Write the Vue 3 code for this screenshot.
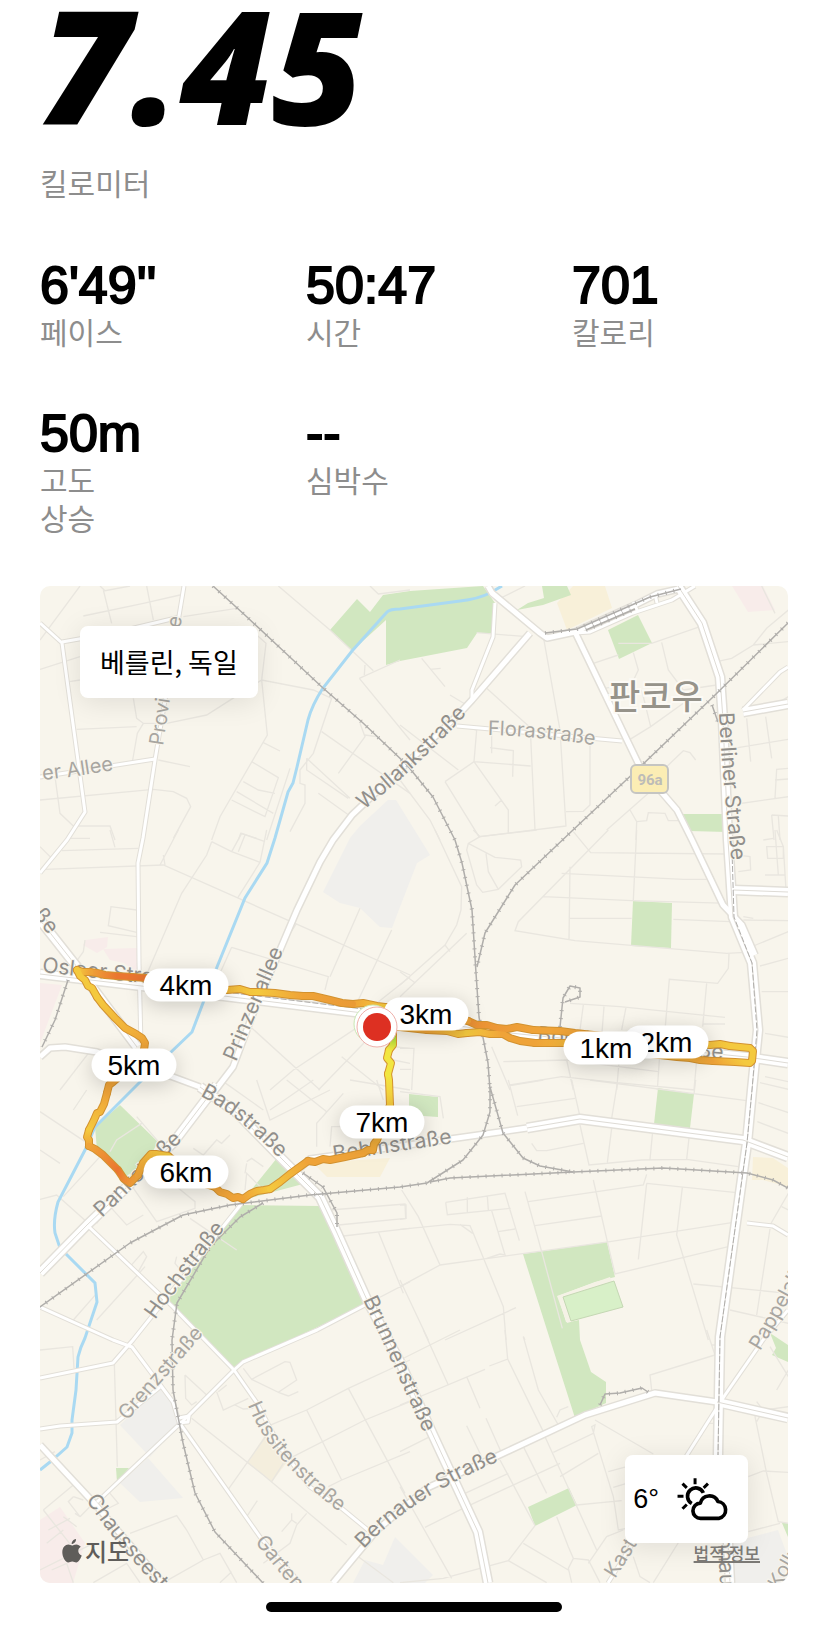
<script setup>
const stats = [
  { value: "6'49''", label: ['페이스'] },
  { value: '50:47', label: ['시간'] },
  { value: '701', label: ['칼로리'] },
  { value: '50m', label: ['고도', '상승'] },
  { value: '--', label: ['심박수'] },
]

const origin = { x: 40, y: 586, w: 748, h: 997 }
const place = (p) => ({
  left: ((p.x - origin.x) / origin.w) * 100 + '%',
  top: ((p.y - origin.y) / origin.h) * 100 + '%',
})

const pins = [
  { text: '2km', x: 666, y: 1042 },
  { text: '1km', x: 606, y: 1048 },
  { text: '3km', x: 426, y: 1014 },
  { text: '4km', x: 186, y: 985 },
  { text: '5km', x: 134, y: 1065 },
  { text: '6km', x: 186, y: 1172 },
  { text: '7km', x: 382, y: 1122 },
]

const O = '#efa338'
const Y = '#f4c93e'
const R = '#ea7630'
const G = '#8fd53a'
const L = '#f2e640'
const route = [
  ['377,1026 400,1027 427,1030', Y, O],
  ['427,1030 447,1031 458,1034 467,1033', O, Y],
  ['467,1033 480,1032 490,1034 503,1034', Y, O],
  ['503,1034 510,1038 520,1041 535,1043', O, O],
  ['535,1043 550,1043 565,1043 600,1048', O, Y],
  ['600,1048 677,1057 690,1058 700,1060 713,1061', Y, O],
  ['713,1061 735,1062 750,1063 752,1061 753,1051 750,1048 730,1046', O, Y],
  ['730,1046 720,1044 710,1045 640,1040', Y, O],
  ['640,1040 575,1033 560,1031 533,1030', O, O],
  ['533,1030 517,1027 507,1029 497,1028 487,1025 477,1025 468,1021', O, '#ea8f34'],
  ['468,1021 420,1010 385,1007', O, Y],
  ['385,1007 377,1006 363,1003 353,1004', Y, O],
  ['353,1004 342,1003 330,1000 313,996 303,996', '#ea9a36', O],
  ['303,996 290,995 275,993 257,992', O, Y],
  ['257,992 250,992 240,989 227,990 186,984', Y, O],
  ['186,984 146,978 133,977 117,976', R, R],
  ['117,976 105,975 97,973 90,972', R, O],
  ['90,972 83,972 77,970', O, Y],
  ['77,970 80,976 85,980 88,986 92,988 97,997', Y, Y],
  ['97,997 103,1005 115,1018 125,1028 136,1034 142,1038 145,1043 144,1050', Y, O],
  ['144,1050 134,1064 113,1082 109,1085 107,1093', O, O],
  ['107,1093 104,1104 100,1112 97,1113 94,1120 89,1130', O, Y],
  ['89,1130 87,1137 89,1140 89,1146', Y, O],
  ['89,1146 95,1149 103,1155 111,1163 118,1170', O, R],
  ['118,1170 124,1179 130,1183 138,1175', R, O],
  ['138,1175 143,1163 151,1154 156,1154 168,1156', O, Y],
  ['168,1156 186,1170 205,1184 215,1187', Y, O],
  ['215,1187 220,1192 227,1194 233,1198 238,1197 243,1199', O, O],
  ['243,1199 250,1194 257,1191 264,1190 270,1189', O, Y],
  ['270,1189 280,1182 290,1174 308,1161', Y, O],
  ['308,1161 315,1162 323,1159 330,1160 345,1157 363,1153', O, O],
  ['363,1153 368,1150 373,1150 374,1144 377,1140 390,1105', O, Y],
  ['390,1105 389,1080 388,1074', Y, L],
  ['388,1074 391,1063 387,1058 389,1050', L, L],
  ['389,1050 393,1045 393,1033', L, G],
].map(([points, from, to]) => {
  const list = points.split(' ').map((p) => p.split(',').map(Number))
  return { points, from, to, a: list[0], b: list[list.length - 1] }
})

const parks = [
  '357,599 370,612 383,595 410,591 483,586 495,603 492,633 477,633 467,648 400,661 386,665 386,620 352,651 330,630',
  '542,586 567,586 571,595 543,605 517,610 528,603 544,598',
  '608,630 638,615 652,643 619,659',
  '682,814 727,814 727,832 689,831',
  '633,901 672,903 671,948 631,946',
  '120,1105 158,1142 145,1165 130,1183 97,1150 95,1127',
  '277,1158 303,1184 243,1200',
  '242,1205 320,1206 365,1305 243,1362 234,1369 168,1300',
  '409,1094 438,1097 438,1117 409,1115',
  '658,1088 694,1094 690,1128 654,1124',
  '523,1254 607,1242 615,1277 595,1282 558,1296 566,1322 579,1320 580,1340 591,1372 606,1382 606,1403 587,1412 575,1418 547,1330',
  '528,1507 569,1488 577,1505 535,1526',
  '770,1333 788,1345 788,1362 772,1355 776,1348',
  '782,1523 788,1523 788,1537',
  '116,1468 129,1468 117,1482',
]
const blocks = [
  '388,800 396,800 430,855 417,863 400,907 392,928 380,927 360,908 340,903 323,892 350,838 360,826',
  '120,1425 160,1387 173,1402 178,1425 150,1457',
  '148,1458 183,1498 140,1502 120,1483',
  '353,1583 365,1560 383,1565 395,1537 433,1575 425,1583',
  '728,1543 778,1530 788,1557 783,1583 733,1583',
]
const sands = [
  '557,603 573,586 605,586 612,608 567,630',
  '313,1163 390,1158 380,1177 327,1177',
  '753,1157 773,1158 788,1168 788,1187 763,1180 752,1180',
]
const roses = [
  '732,586 763,586 775,610 748,612',
  '83,945 86,940 108,937 107,947 97,953',
  '103,949 137,948 137,973 124,963 110,960',
  '40,983 62,985 45,1030 40,1043',
  '40,1520 60,1507 85,1543 73,1583 40,1583',
]

const rails = [
  '213,586 247,617 323,688 363,723 407,765 433,797 455,840 462,863 472,910 476,973 479,1017 488,1063 490,1090 490,1112 483,1135 463,1160 427,1183 400,1187 310,1195 230,1205 183,1215 130,1243 40,1307',
  '788,623 713,697 640,767 573,830 515,885 485,933 477,967',
  '490,1087 503,1133 523,1158 540,1166 573,1172',
  '430,1182 450,1178 573,1172 663,1168 747,1173 773,1180 788,1188',
  '263,1203 240,1217 210,1247 177,1303 172,1340 173,1390 183,1443 195,1493 215,1532 263,1583',
  '560,1027 563,998 570,986 580,988 580,997 565,1002',
  '600,1405 605,1394 620,1393 642,1388 648,1392',
  '303,1173 323,1187 337,1213 337,1227',
  '68,980 55,1020 42,1047',
  '545,633 577,629 650,597 681,589',
  '586,630 635,609',
  '712,705 718,722',
]

const streets = [
  '495,603 493,637 472,690 472,700',
  '40,623 62,643 85,812 67,840 40,873',
  '62,642 113,633 180,617',
  '184,586 155,760 143,838 138,863 139,963 141,1045',
  '40,777 155,759',
  '575,633 590,632 633,613 672,600 695,586',
  '633,602 638,612',
  '655,594 657,603',
  '788,667 780,672 743,710',
  '87,1225 173,1307 234,1370 243,1362 317,1330 365,1305',
  '40,1307 113,1340 132,1347 173,1402 179,1422 227,1490 260,1537 300,1583',
  '234,1370 187,1417 97,1502',
  '179,1418 189,1416 188,1422 178,1423',
  '234,1370 257,1403 280,1447 310,1487 340,1507 368,1530',
  '40,1429 60,1426 117,1422 160,1387',
  '788,1310 763,1340 725,1395 687,1455 633,1543 608,1583',
  '747,1223 773,1226 788,1235',
  '457,726 622,741',
  '242,1203 133,1340 113,1363 40,1378',
]
const avenues = [
  '530,633 472,700 460,713 352,815 333,840 320,862 297,910 280,950 257,1003 233,1067 217,1088 173,1143',
  '488,586 492,593 540,633 547,638 575,632 635,605 657,594 683,588',
  '575,632 640,767 677,810 692,840 723,905 742,925 755,955',
  '300,1168 310,1159 450,1139 527,1128',
  '333,1583 352,1560 377,1530 427,1488 493,1458 585,1415 655,1393 717,1402',
  '40,1057 50,1048 65,1047 97,1052 173,1077 200,1087',
  '40,1445 93,1502 163,1583',
]
const boulevards = [
  '217,1085 173,1143 87,1225 40,1273',
  '678,586 702,623 720,677 723,720 728,840 733,917 752,963 758,1030 752,1090 747,1143 720,1337 718,1455 728,1543 730,1583',
  '743,712 788,704',
  '733,890 788,892',
  '40,974 150,987 363,1013 510,1033 747,1057 788,1063',
  '40,920 77,967 137,1047',
  '200,1087 237,1113 283,1160 320,1197 337,1233 367,1300 400,1362 432,1433 478,1532 488,1583',
  '527,1128 580,1119 743,1140 788,1157',
  '717,1402 788,1418',
]

// Side streets, drawn per map tile on a grid three times finer than the map.
const tiles = [
  { at: '30 580', d: 'M30 180 150 18M160 108 340 70 450 45M220 30 245 130M350 18 370 120M210 18 225 32 300 18M460 110 620 85M30 268 150 230M118 305 150 300M310 355 320 415 340 430 322 460 308 540M140 448 320 440M340 430 410 430 530 405 695 300 850 330 905 355 850 520 810 570 810 610 825 615 825 670 780 755M680 165 708 190 695 300 712 465 570 710 545 780M745 18 900 150 1030 272M1005 255 1003 285M988 295 1110 240M988 295 1140 480M875 455 1140 640M925 580 1005 470 990 430M1005 465 1040 470M830 535 960 655M830 535 830 570 955 655M865 640 960 708M385 540 480 560M30 660 370 628 430 635 470 655 482 680 430 775M75 590 90 700 130 738 240 738 255 780M700 488 750 513M665 545 745 593 705 710 605 660M640 605 685 630 735 640M620 635 730 700M780 565 710 780M625 780 632 760 680 775M1020 18 1045 42 1140 30' },
  { at: '400 580', d: 'M230 158 380 170M65 235 135 320M90 268 122 265M150 345 195 372M260 325 410 460 475 445M430 170 480 450 498 740M165 435 230 450 222 545 392 558M0 435 175 570M135 605 222 545M392 470 405 750M222 545 325 690 325 755M135 605 237 770 498 738M285 678 305 660M275 455 275 520M270 503 340 512 338 590M498 695 550 694 570 675 570 490M580 250 655 225M655 190 755 190 900 140M785 187 805 270 850 330 950 315M700 218 715 270 695 312 612 325M725 330 752 440 690 478M752 440 850 370M950 245 995 235 1060 195 1100 145 1165 90M1165 185 1060 195M800 560 850 512 870 518 887 540M620 750 745 640M690 690 710 725 740 722 745 698 795 700 805 722 840 722M710 725 708 780M1000 505 1165 478M1040 415 1052 545M1097 410 1115 535M1010 672 1165 650M1165 565 1130 568 1125 655M1125 600 1165 597M1115 705 1165 708M1115 705 1122 780M1135 708 1140 780M1085 18 1125 100M1140 365 1165 350M0 600 90 720 120 780M290 60 375 18' },
  { at: '30 830', d: 'M30 50 65 85M120 25 180 25M95 62 325 55M45 118 400 105 885 320 1140 435M445 0 390 105M400 75 405 105M545 35 605 65 690 97M545 35 530 75 455 190 330 480M605 65 635 10 705 35M625 65 645 15M710 0 690 97 622 205M240 0 255 52M320 240 243 230 235 287 320 307M210 307 320 320M165 330 160 365 135 400M990 235 900 440M1085 300 985 510M800 280 740 370M605 352 895 440 885 480M605 352 570 430M1140 440 1040 520M650 580 870 780M1000 580 790 720 720 780M935 680 1060 780M865 780 1020 620M175 670 90 780M1090 650 1140 655M1090 690 1140 700' },
  { at: '400 830', d: 'M105 0 185 170 183 240 170 285 135 345 0 465M200 310 0 500M135 345 150 365M0 425 45 458M220 0 240 20 410 0M325 0 325 8M240 20 205 40 200 60 230 165 248 187 295 178 365 110 362 90 285 82 205 40M258 70 265 125 295 178M520 5 572 68 980 72M625 0 355 275 345 302 525 332 980 370 1035 367M710 0 700 210M485 130 850 148 920 148M430 200 695 212 990 220M510 110 507 330M507 265 695 265M820 268 990 275 1000 265M987 372 985 415 953 460 808 448 795 600M920 460 908 590M510 520 660 530 975 562M550 525 540 600M612 530 605 620M678 532 665 600M0 655 42 655 35 780M0 718 33 718M310 695 500 690 775 725M275 650 330 780M500 690 520 780M330 765 485 740 650 758 885 780M660 660 650 780M780 660 772 780M890 690 882 780M1030 260 1060 265M1030 270 1165 272M1060 348 1165 305M1080 408 1165 385M1085 485 1165 485M1095 610 1165 622M1095 740 1165 755M1100 50 1150 50 1150 85 1103 85ZM1090 30 1120 25M1125 0 1135 135M1095 135 1155 135M1130 0 1150 50 1158 180M1010 75 1050 80 1052 120 1015 125M910 582 975 582' },
  { at: '30 1080', d: 'M30 95 165 185M30 210 90 250M170 30 130 90M240 215 260 180 335 130M320 110 385 185M30 358 80 345 175 430M180 430 300 310 380 425 495 385 495 365 440 320M245 385 290 435 340 405M200 430 290 310M480 415 620 510M300 560 340 515 350 530 325 575M440 530 435 550 460 580M200 640 130 720M345 560 200 720M580 5 700 90M680 0 720 120 900 30M770 0 890 95M720 90 850 0M860 200 860 130 940 40M900 200 905 140 960 140M490 205 520 225 560 180 575 190 600 165M645 330 650 280 700 330M650 245 665 235 700 260M645 280 650 250M900 390 1125 372 1127 415 925 435M940 468 1140 445M1045 455 1120 640M1005 675 1140 605M100 350 210 230M960 0 1140 30M1040 0 1060 60' },
  { at: '400 1080', d: 'M0 35 120 50 130 115M325 0 353 107M330 17 430 0M350 80 525 55M515 0 540 110M652 10 635 115M570 0 1040 62M882 42 887 0M395 190 410 212 440 212 550 190M540 135 567 255 725 240 860 238 1015 260M635 145 622 248M758 155 750 238M868 165 860 238M1080 8 1165 28M1075 68 1165 98M1072 125 1165 160M5 330 55 410 120 555 0 620M0 448 150 433 210 437 222 465 310 680 318 780M180 433 218 460M0 375 18 375 18 415 0 418M137 367 315 340 358 482M137 367 142 404 332 385M202 352 202 398M262 348 265 390M275 392 315 525 300 522 260 535M295 455 345 447M120 555 630 485 1000 427M375 335 425 515 487 745M385 365 730 315 740 283M405 437 605 408M580 300 622 485 645 582 985 500M740 310 1010 338M740 310 715 538M847 323 830 465 925 780M1110 447 1070 705M880 612 1165 640M990 690 1165 730M1165 340 1112 432M1145 380 1165 390M135 780 348 683M0 600 85 780M370 770 375 780' },
  { at: '30 1330', d: 'M30 60 128 50 132 115M253 100 262 410M30 390 75 365M465 135 530 195M465 135 467 205 485 225 500 215M565 185 590 165M560 185 580 240 655 205M615 225 640 237 670 235M640 115 665 148 765 95 780 97 800 150 745 187 665 148M745 187 775 198 805 185M710 290 830 240 955 175 1140 90M830 240 935 450 1140 365M760 395 1005 270 1140 215M955 175 1125 490M895 470 935 450M485 265 700 435 950 645M710 315 590 485M650 560 682 512M830 550 800 585 780 640 700 700M785 550 785 570 755 605M785 570 800 580M725 455 760 400M300 610 440 557 470 600 520 690 400 758M520 690 570 670 620 758M570 758 605 725M40 540 130 465M40 540 150 680M55 600 120 565M50 640 100 600M30 720 190 640M65 720 110 700 130 758M190 758 290 700 330 758M130 500 115 515 150 560 135 550M130 500 160 510M240 490 265 520 225 540M100 560 140 590M985 680 1090 758M150 560 190 520' },
  { at: '400 1330', d: 'M70 0 145 165M0 90 90 45 180 0M0 225 255 118M268 108 323 87 315 0M323 87 430 305M200 140 240 235M370 20 415 180 475 285M470 262 480 240 505 230M258 265 305 370M200 287 245 380M0 365 90 320M435 320 590 660M460 367 580 310 585 285 575 290 640 500 655 600 760 580M585 270 760 372M195 490 325 430M480 440 595 370M75 592 200 530 480 400M0 470 155 745M300 390 405 587 325 692 130 745 0 758M370 350 440 490M325 692 440 758M370 640 505 720M470 560 505 650 520 685 565 690 600 758M520 685 505 715 515 758M565 700 620 620 670 600M530 525 665 512M625 425 680 410M640 472 680 460M700 680 720 740 750 758M760 758 840 630M920 0 945 75 750 135 755 180M915 280 945 280M1070 215 1085 235 1065 260 1100 430 1135 575 1165 580M1045 440 1090 423 1165 427M1045 605 1140 580M1110 50 1165 140M1165 120 1130 180M1165 230 1090 240 1070 275M935 45 948 45' },
]

const names = [
  { id: 'provinz', d: 'M163 746 184 604', text: 'Provinzstraße', soft: true },
  { id: 'allee', d: 'M43 780Q75 777 125 768', text: 'er Allee', soft: true },
  { id: 'wollank', d: 'M364 810Q420 765 470 710', text: 'Wollankstraße' },
  { id: 'flora', d: 'M488 735Q540 736 606 747', text: 'Florastraße', soft: true },
  { id: 'berliner', d: 'M719 713Q722 780 734 880', text: 'Berliner Straße' },
  { id: 'prinzen', d: 'M236 1062Q258 1010 290 935', text: 'Prinzenallee' },
  { id: 'osloer', d: 'M42 972Q110 980 195 988', text: 'Osloer Straße' },
  { id: 'bornholmer', d: 'M537 1041 750 1062', text: 'Bornholmer Straße' },
  { id: 'schwed', d: 'M33 915Q44 927 60 954', text: 'ße' },
  { id: 'bad', d: 'M200 1096Q240 1115 288 1168', text: 'Badstraße' },
  { id: 'pank', d: 'M102 1218 198 1125', text: 'Pankstraße' },
  { id: 'hoch', d: 'M155 1320Q192 1268 236 1215', text: 'Hochstraße' },
  { id: 'grenz', d: 'M127 1421Q168 1375 212 1324', text: 'Grenzstraße', soft: true },
  { id: 'behm', d: 'M334 1161Q400 1151 480 1139', text: 'Behmstraße' },
  { id: 'brunnen', d: 'M363 1300Q395 1368 434 1456', text: 'Brunnenstraße' },
  { id: 'hussiten', d: 'M248 1405Q268 1460 350 1520', text: 'Hussitenstraße', soft: true },
  { id: 'garten', d: 'M255 1542Q288 1585 340 1640', text: 'Gartenstraße', soft: true },
  { id: 'chaussee', d: 'M86 1500Q122 1555 190 1620', text: 'Chausseestraße' },
  { id: 'bernauer', d: 'M364 1549Q415 1493 515 1455', text: 'Bernauer Straße' },
  { id: 'kastanien', d: 'M615 1579 690 1460', text: 'Kastanienallee', soft: true },
  { id: 'schoenhauser', d: 'M715 1487Q720 1570 724 1700', text: 'Schönhauser Allee' },
  { id: 'pappel', d: 'M760 1351Q785 1310 815 1250', text: 'Pappelallee', soft: true },
  { id: 'kollwitz', d: 'M779 1590 830 1500', text: 'Kollwitzstraße', soft: true },
]
</script>

<template>
  <main class="run">
    <header>
      <h1 class="distance">7.45</h1>
      <p class="label">킬로미터</p>
    </header>

    <dl class="stats">
      <div v-for="s in stats" :key="s.value" class="stat">
        <dd class="value">{{ s.value }}</dd>
        <dt class="label"><span v-for="l in s.label" :key="l" class="line">{{ l }}</span></dt>
      </div>
    </dl>

    <section class="map" aria-label="베를린, 독일">
      <svg class="canvas" viewBox="40 586 748 997" aria-hidden="true">
        <defs>
          <linearGradient
            v-for="(r, i) in route" :id="'seg' + i" :key="i" gradientUnits="userSpaceOnUse"
            :x1="r.a[0]" :y1="r.a[1]" :x2="r.b[0]" :y2="r.b[1]"
          >
            <stop offset="0" :stop-color="r.from" /><stop offset="1" :stop-color="r.to" />
          </linearGradient>
          <path v-for="n in names" :id="n.id" :key="n.id" :d="n.d" />
        </defs>

        <rect x="40" y="586" width="748" height="997" fill="#f8f5ec" />
        <polygon v-for="p in blocks" :key="p" :points="p" fill="#f0efec" />
        <polygon v-for="p in sands" :key="p" :points="p" fill="#f8f0d9" />
        <polygon v-for="p in roses" :key="p" :points="p" fill="#f8ecea" />
        <polygon points="265,1435 287,1462 272,1482 247,1463" fill="#f4eedd" />
        <polygon v-for="p in parks" :key="p" :points="p" fill="#d1e7c0" />
        <polygon points="557,1296 610,1277 624,1307 567,1323" fill="#f5f2e6" />
        <polygon points="563,1297 614,1281 623,1307 571,1321" fill="#d8f0c8" stroke="#c5d8b4" />

        <g v-for="t in tiles" :key="t.at" class="side" :transform="`translate(${t.at}) scale(0.33333)`">
          <path :d="t.d" />
        </g>
        <path
          class="river"
          d="M502 586 490 593Q478 599 460 601L400 609Q390 609 387 612L352 651 323 688Q312 705 308 720L297 767 293 783 288 792 275 838 267 863 245 898 217 967 203 1003 192 1032 170 1053 140 1082 95 1127 85 1150 58 1202Q53 1220 55 1233L60 1248 95 1283 97 1302 85 1338Q80 1348 78 1357L76 1390 72 1420V1433L67 1447 50 1462 40 1470"
        />

        <g class="line-art">
          <g stroke="#e2dfd8">
            <polyline v-for="p in streets" :key="p" :points="p" stroke-width="5" />
            <polyline v-for="p in avenues" :key="p" :points="p" stroke-width="8" />
            <polyline v-for="p in boulevards" :key="p" :points="p" stroke-width="11" />
          </g>
          <g stroke="#ffffff">
            <polyline v-for="p in streets" :key="p" :points="p" stroke-width="3" />
            <polyline v-for="p in avenues" :key="p" :points="p" stroke-width="5" />
            <polyline v-for="p in boulevards" :key="p" :points="p" stroke-width="8" />
          </g>
          <polyline v-for="p in boulevards" :key="p" :points="p" stroke="#dedbd5" stroke-width="1" />
          <g stroke="#b0aeab">
            <polyline points="732,850 734,917 752,963 757,1030 752,1090 747,1143 720,1337 718,1455" stroke-dasharray="6 2" />
            <polyline points="225,992 363,1009" stroke-dasharray="6 2" />
            <polyline v-for="p in rails" :key="p" :points="p" stroke-width="1.5" />
            <polyline v-for="p in rails" :key="p" :points="p" stroke-width="4" stroke-dasharray="1 7" />
          </g>
        </g>

        <g class="names">
          <text v-for="n in names" :key="n.id" :class="{ soft: n.soft }">
            <textPath :href="'#' + n.id">{{ n.text }}</textPath>
          </text>
        </g>
        <text class="district" x="609" y="709">판코우</text>
        <rect x="631" y="765" width="37" height="28" rx="5" fill="#fbedb4" stroke="#c5c5c2" stroke-width="2" />
        <text class="shield" x="650" y="785">96a</text>

        <g class="line-art">
          <polyline v-for="r in route" :key="r.points" :points="r.points" stroke="#d3922f" stroke-width="8" />
          <polyline v-for="(r, i) in route" :key="i" :points="r.points" :stroke="`url(#seg${i})`" stroke-width="6" />
        </g>
      </svg>

      <span v-for="p in pins" :key="p.text" class="pin" :style="place(p)">{{ p.text }}</span>
      <svg class="marker" :style="place({ x: 375, y: 1026 })" viewBox="0 0 46 46" aria-hidden="true">
        <circle cx="21" cy="21" r="19" fill="#fff" stroke="#c9e8b4" />
        <circle cx="25" cy="24" r="20" fill="#fff" stroke="#eeb0aa" />
        <circle cx="25" cy="24" r="14" fill="#dd3022" />
      </svg>

      <div class="card city">베를린, 독일</div>
      <div class="card weather">
        <span>6°</span>
        <svg class="sky" viewBox="833 440 159 130" aria-hidden="true">
          <g fill="none" stroke="#000" stroke-width="11">
            <path d="M877 517A25 25 0 1 1 912 485" />
            <path d="M887 441V459M849 457 862 470M834 495H852M849 533 862 520M926 457 913 470" stroke-width="9" />
            <path d="M904 562A23 23 0 0 1 903 516A28 28 0 0 1 956 511A26 26 0 0 1 960 562Z" stroke-linejoin="round" />
          </g>
        </svg>
      </div>

      <div class="brand">
        <svg class="apple" viewBox="0 0 20 24" aria-hidden="true">
          <path d="M14 0c.2 2.600-1.900 5-4.300 5C9.500 2.600 11.600.4 14 0zM10 6.600c1 0 2.300-1.200 4.300-1.200 1.800 0 3.500.9 4.500 2.400-3.700 2.200-3.200 7.200.9 8.700-.9 2.900-3.200 7-5.500 7-1.500 0-2.100-.9-4-.9-1.800 0-2.500.9-3.900.9C3.500 23.500.3 18 .3 13.200.3 8.400 3.400 5.600 6.300 5.600 7.800 5.600 9.200 6.600 10 6.600z" fill="#5f5d5a" />
        </svg>
        <span>지도</span>
      </div>
      <a class="legal" href="#legal">법적 정보</a>
    </section>

    <div class="home-bar"></div>
  </main>
</template>

<style>
body {
  margin: 0;
  background: #fff;
}
</style>

<style scoped>
.run {
  box-sizing: border-box;
  padding: 0 40px 16px;
  overflow: hidden;
  color: #000;
  font-family: 'Liberation Sans', 'Noto Sans CJK KR', sans-serif;
}
.distance {
  margin: 0;
  font: italic 800 158px/128px 'Open Sans', Lato, sans-serif;
}
p.label {
  margin: 35px 0 0;
}
.label {
  color: #8d8d8d;
  font-family: 'Noto Sans CJK KR', sans-serif;
  font-size: 30px;
  line-height: 38px;
}
.line {
  display: block;
}
.stats {
  display: grid;
  grid-template-columns: repeat(3, 1fr);
  gap: 56px 50px;
  margin: 57px 0 50px;
}
.stat {
  display: flex;
  flex-direction: column;
}
.value {
  margin: 0;
  font-size: 52px;
  line-height: 54px;
  -webkit-text-stroke: 2px #000;
}
.map {
  position: relative;
  overflow: hidden;
  border-radius: 10px;
}
.canvas {
  display: block;
  width: 100%;
  height: auto;
}
.side path {
  fill: none;
  stroke: #e9e6df;
  stroke-width: 4;
}
.river {
  fill: none;
  stroke: #a9d9f2;
  stroke-width: 3;
}
.line-art {
  fill: none;
  stroke-linejoin: round;
  stroke-linecap: butt;
}
.line-art:last-child {
  stroke-linecap: round;
}
.names {
  font: 400 21px Inter, sans-serif;
  fill: #918f8b;
  stroke: #f8f5ec;
  stroke-width: 2px;
  paint-order: stroke;
}
.names .soft {
  font-size: 20px;
  fill: #a8a6a1;
}
.district {
  font: 500 34px 'Noto Sans CJK KR', sans-serif;
  fill: #96938a;
  stroke: #fcfaf5;
  stroke-width: 4px;
  paint-order: stroke;
}
.shield {
  font: 700 15px Roboto, sans-serif;
  fill: #bdbcb8;
  text-anchor: middle;
}
.pin {
  position: absolute;
  box-sizing: border-box;
  width: 85px;
  border-radius: 17px;
  background: #fff;
  box-shadow: 0 4px 20px rgba(0, 0, 0, 0.18);
  font-size: 28px;
  line-height: 33px;
  text-align: center;
  transform: translate(-50%, -50%);
}
.marker {
  position: absolute;
  width: 46px;
  height: 46px;
  transform: translate(-50%, -50%);
}
.card {
  position: absolute;
  display: flex;
  align-items: center;
  border-radius: 8px;
  background: #fff;
  box-shadow: 0 4px 28px rgba(0, 0, 0, 0.1);
  font-size: 27px;
}
.city {
  top: 40px;
  left: 40px;
  padding: 0 20px;
  font-family: 'Noto Sans CJK KR', sans-serif;
  line-height: 72px;
}
.weather {
  right: 40px;
  bottom: 40px;
  gap: 18px;
  padding: 0 18px 0 8px;
  line-height: 88px;
}
.sky {
  width: 53px;
  height: 43px;
}
.brand {
  position: absolute;
  bottom: 16px;
  left: 22px;
  display: flex;
  gap: 3px;
  align-items: center;
  color: #5f5d5a;
  font: 500 24px/32px 'Noto Sans CJK KR', sans-serif;
}
.apple {
  width: 20px;
  height: 24px;
}
.legal {
  position: absolute;
  right: 28px;
  bottom: 18px;
  color: #7b7975;
  font: 500 17px/24px 'Noto Sans CJK KR', sans-serif;
  text-decoration: underline 2px;
}
.home-bar {
  width: 296px;
  height: 10px;
  margin: 19px auto 0;
  border-radius: 5px;
  background: #000;
}
</style>
